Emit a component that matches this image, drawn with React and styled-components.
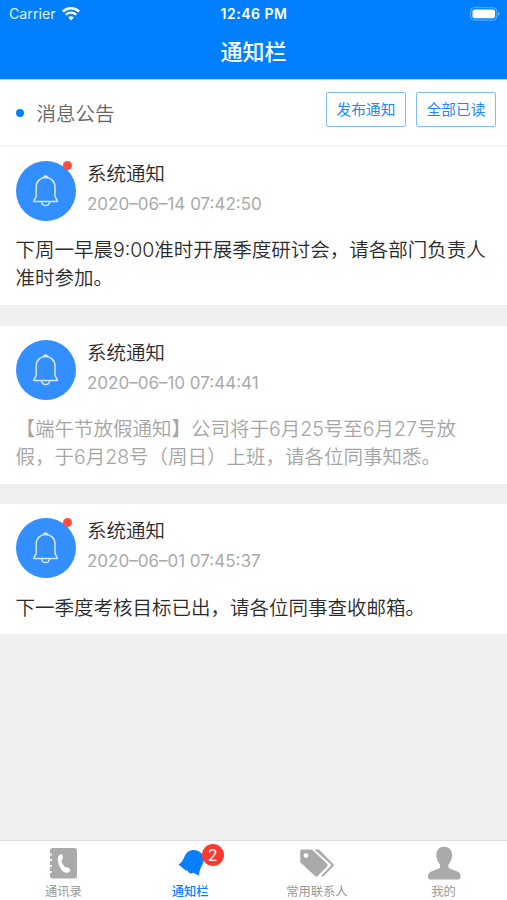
import styled, { createGlobalStyle } from "styled-components";

const notices = [
  {
    id: 1,
    title: "系统通知",
    time: "2020–06–14 07:42:50",
    text: "下周一早晨9:00准时开展季度研讨会，请各部门负责人\n准时参加。",
    read: false,
  },
  {
    id: 2,
    title: "系统通知",
    time: "2020–06–10 07:44:41",
    text: "【端午节放假通知】公司将于6月25号至6月27号放\n假，于6月28号（周日）上班，请各位同事知悉。",
    read: true,
  },
  {
    id: 3,
    title: "系统通知",
    time: "2020–06–01 07:45:37",
    text: "下一季度考核目标已出，请各位同事查收邮箱。",
    read: false,
  },
];

const tabs = [
  { label: "通讯录", icon: <ContactsIcon /> },
  { label: "通知栏", icon: <NoticeIcon />, active: true, count: 2 },
  { label: "常用联系人", icon: <TagsIcon /> },
  { label: "我的", icon: <UserIcon /> },
];

export default function App() {
  return (
    <>
      <GlobalStyle />
      <Screen>
        <Header>
          <StatusBar>
            <Carrier>
              Carrier
              <WifiIcon />
            </Carrier>
            <Clock>12:46 PM</Clock>
            <BatteryIcon />
          </StatusBar>
          <PageTitle>通知栏</PageTitle>
        </Header>
        <Toolbar>
          <Dot />
          <ToolbarTitle>消息公告</ToolbarTitle>
          <Button>发布通知</Button>
          <Button>全部已读</Button>
        </Toolbar>
        <List>
          {notices.map((notice) => (
            <Card key={notice.id}>
              <CardHead>
                <Avatar>
                  <BellIcon />
                  {!notice.read && <UnreadDot />}
                </Avatar>
                <div>
                  <CardTitle>{notice.title}</CardTitle>
                  <Time>{notice.time}</Time>
                </div>
              </CardHead>
              <CardText $read={notice.read}>{notice.text}</CardText>
            </Card>
          ))}
        </List>
        <TabBar>
          {tabs.map((tab) => (
            <Tab key={tab.label}>
              <TabIcon>
                {tab.icon}
                {tab.count && <Badge>{tab.count}</Badge>}
              </TabIcon>
              <TabLabel $active={tab.active}>{tab.label}</TabLabel>
            </Tab>
          ))}
        </TabBar>
      </Screen>
    </>
  );
}

function WifiIcon() {
  return (
    <svg width="18" height="14" viewBox="0 0 18 14" fill="none">
      <path d="M.9 4.5a11.6 11.6 0 0 1 16.2 0" stroke="#fff" strokeWidth="2.5" />
      <path d="M3.8 7.8a7.4 7.4 0 0 1 10.4 0" stroke="#fff" strokeWidth="2.3" />
      <path d="M6.2 10.6a4 4 0 0 1 5.6 0L9 13.6z" fill="#fff" />
    </svg>
  );
}

function BatteryIcon() {
  return (
    <svg width="30" height="14" viewBox="0 0 30 14">
      <rect
        x="0.7"
        y="0.7"
        width="26.2"
        height="12.4"
        rx="3.6"
        fill="none"
        stroke="#fff"
        strokeOpacity="0.4"
      />
      <rect x="2.5" y="2.5" width="22.6" height="8.8" rx="2" fill="#fff" />
      <path d="M28.2 4.8c1.8.7 1.8 3.5 0 4.2z" fill="#fff" fillOpacity="0.5" />
    </svg>
  );
}

function BellIcon() {
  return (
    <svg width="28" height="34" viewBox="0 0 28 34" fill="none">
      <g stroke="#d3e7ff" strokeWidth="1.5" strokeLinejoin="round">
        <path d="M4.200 22V13.200C4.200 7.200 8.400 3.600 13.600 3.600S23 7.200 23 13.200V22c0 2.200 2.400 3 2.400 5.600H1.800C1.800 25 4.200 24.200 4.200 22z" />
        <path d="M9.6 28c.4 2.4 2.1 3.600 4 3.600s3.600-1.200 4-3.600" />
        <path d="M11 3.700c.3-1.600 1.200-2.300 2.600-2.300s2.300.7 2.600 2.300z" fill="#d3e7ff" strokeWidth="0.6" />
      </g>
    </svg>
  );
}

function ContactsIcon() {
  return (
    <svg width="36" height="34" viewBox="-2.5 0 36 34">
      <path
        d="M5 2h22c1.500 0 2.500 1 2.500 2.500v25.500c0 1.500-1 2.500-2.500 2.500H5c-1.500 0-2.500-1-2.500-2.500v-3h1.800v-2H2.500v-4h1.800v-2H2.500v-4h1.800v-2H2.500V9.500h1.800v-2H2.500V4.500C2.500 3 3.500 2 5 2z"
        fill="#aaa"
      />
      <path
        d="M12.200 8.800c1.600-1.300 2.700-.6 3 1.200.4 2 .4 3-.7 3.900-.8.700-.4 2 .8 4.100 1.300 2.200 2.300 3.600 3.500 3.400 1.400-.3 2.300.4 3.500 1.800 1.100 1.300.5 2.400-1.300 3.200-3.400 1.300-6-.9-8.100-4.500-2.800-4.900-3.900-10.500-.7-13.100z"
        fill="#fff"
      />
    </svg>
  );
}

function NoticeIcon() {
  return (
    <svg width="36" height="34" viewBox="0 0 36 34">
      <path
        d="M6.500 18.500c3.500-2 4.500-4.600 6.100-8.300C15 4.800 20.200 2.600 25.600 4.800c5.600 2.300 7.500 7 5.500 12.200-1.400 3.600-4.100 7-3.900 12.700l-6-3c-2 1.500-4.700.7-5.700-2.300l-1.800.2z"
        fill="#087fff"
      />
    </svg>
  );
}

function TagsIcon() {
  return (
    <svg width="36" height="34" viewBox="0 0 36 34">
      <path
        d="M3.300 3.500h8.200c1 0 1.900.4 2.600 1.100l14 13.200c.8.8.8 1.900 0 2.700l-9.300 9.600c-.8.8-1.900.8-2.700 0L2.200 17.300c-.8-.8-1-1.500-1-2.500V5.600c0-1.300.8-2.100 2.100-2.100zM7 7.200a2.400 2.400 0 1 0 0 4.800 2.400 2.400 0 0 0 0-4.800z"
        fill="#aaa"
        fillRule="evenodd"
      />
      <path
        d="M15.300 3.500h3.100c1 0 1.800.4 2.500 1.100L34.200 17.900c.8.8.8 1.700 0 2.500l-9.500 9.700c-.9.800-1.900.9-2.800.2l9.500-10c.8-.8.8-1.500 0-2.300z"
        fill="#aaa"
      />
    </svg>
  );
}

function UserIcon() {
  return (
    <svg width="36" height="34" viewBox="0 0 36 34">
      <path
        d="M18.200.8c4.800 0 7.900 3.300 7.900 8.300 0 4.400-1.500 7.200-3.600 9.400-.6 2.500.1 3.800 2.200 4.600l6.200 2.200c2.600 1 3.700 2.900 3.700 5.300 0 1.900-.9 2.900-2.700 2.900H4.600c-1.800 0-2.700-1-2.700-2.900 0-2.400 1.200-4.300 3.800-5.300l6.100-2.200c2.100-.8 2.800-2.100 2.200-4.600-2.200-2.200-3.700-5-3.700-9.400 0-5 3.100-8.300 7.900-8.300z"
        fill="#aaa"
      />
    </svg>
  );
}

const GlobalStyle = createGlobalStyle`
  * {
    box-sizing: border-box;
  }
  body {
    margin: 0;
    font-family: Inter, "Noto Sans CJK SC", sans-serif;
  }
`;

const Screen = styled.div`
  display: flex;
  flex-direction: column;
  height: 100vh;
  background: #efefef;
  overflow: hidden;
`;

const Header = styled.header`
  height: 79px;
  flex-shrink: 0;
  background: #0080ff;
  color: #fff;
`;

const StatusBar = styled.div`
  display: grid;
  grid-template-columns: 1fr auto 1fr;
  align-items: center;
  height: 27px;
  padding: 0 7px 0 9px;
  font-size: 14px;

  > svg {
    justify-self: end;
  }
`;

const Carrier = styled.div`
  display: flex;
  align-items: center;
  gap: 6px;
  color: #e3f1ff;
  font-size: 14.2px;
`;

const Clock = styled.div`
  font-weight: 600;
  font-size: 14px;
  letter-spacing: 0.5px;
  margin-right: 1px;
`;

const PageTitle = styled.h1`
  margin: 0;
  font-size: 22px;
  font-weight: 500;
  line-height: 50px;
  text-align: center;
`;

const Toolbar = styled.div`
  display: flex;
  align-items: center;
  flex-shrink: 0;
  height: 68px;
  padding: 0 11px 0 16px;
  background: #fff;
  border-top: 1px solid #a6d6ff;
  border-bottom: 2px solid #f4f4f4;
`;

const Dot = styled.span`
  width: 8px;
  height: 8px;
  border-radius: 50%;
  background: #0080ff;
`;

const ToolbarTitle = styled.h2`
  flex: 1;
  margin: 0 0 0 12.5px;
  font-size: 19.5px;
  font-weight: 350;
  color: #666;
`;

const Button = styled.button`
  width: 80px;
  height: 35px;
  margin: -7px 0 0 10px;
  padding: 0 0 1px;
  border: 1px solid #80bdfb;
  border-radius: 2px;
  background: #fff;
  color: #2287ee;
  font-family: inherit;
  font-size: 14.7px;
`;

const List = styled.main`
  display: flex;
  flex-direction: column;
  flex: 1;
  gap: 20.6px;
`;

const Card = styled.article`
  padding: 14px 15.5px 12px;
  background: #fff;
`;

const CardHead = styled.div`
  display: flex;
  gap: 11.5px;
  height: 60px;
`;

const Avatar = styled.div`
  position: relative;
  display: flex;
  align-items: center;
  justify-content: center;
  width: 60px;
  height: 60px;
  border-radius: 50%;
  background: #338fff;
`;

const UnreadDot = styled.span`
  position: absolute;
  top: 0;
  right: 3.5px;
  width: 9px;
  height: 9px;
  border-radius: 50%;
  background: #ff4c3c;
`;

const CardTitle = styled.h3`
  margin: 0;
  font-size: 19.5px;
  font-weight: 350;
  line-height: 27px;
  color: #2a2a2a;
`;

const Time = styled.time`
  display: block;
  margin-top: 3px;
  font-size: 17px;
  line-height: 26px;
  color: #aaa;
`;

const CardText = styled.p`
  margin: 16.4px 0 0;
  font-size: 19.5px;
  font-weight: 350;
  line-height: 27.8px;
  white-space: pre;
  color: ${({ $read }) => ($read ? "#a4a4a4" : "#2a2a2a")};
`;

const TabBar = styled.nav`
  display: flex;
  flex-shrink: 0;
  height: 60px;
  border-top: 1px solid #dcdcdc;
  background: #fff;
`;

const Tab = styled.div`
  display: flex;
  flex-direction: column;
  align-items: center;
  flex: 1;
  padding-top: 5px;
`;

const TabIcon = styled.div`
  position: relative;
  height: 36px;
`;

const Badge = styled.span`
  position: absolute;
  top: -2px;
  left: 29.5px;
  width: 22px;
  height: 22px;
  border-radius: 50%;
  background: #fb3b32;
  color: #fff;
  font-size: 16px;
  line-height: 22px;
  text-align: center;
`;

const TabLabel = styled.span`
  font-size: 12.3px;
  font-weight: ${({ $active }) => ($active ? 500 : 400)};
  line-height: 20px;
  color: ${({ $active }) => ($active ? "#087fff" : "#999")};
`;
